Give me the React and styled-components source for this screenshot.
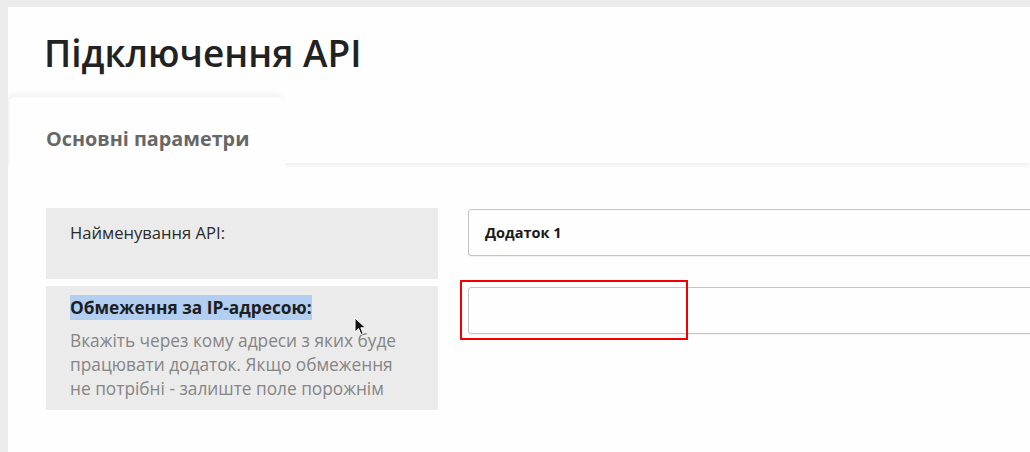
import React from 'react';
import styled, { createGlobalStyle } from 'styled-components';

const Global = createGlobalStyle`
    html, body {
        margin: 0;
        padding: 0;
        background: #ebebeb;
        font-family: "Open Sans", "Noto Sans", sans-serif;
        overflow: hidden;
    }
`;

const Page = styled.div`
    height: 452px;
    padding: 7px 0 0 8px;
    box-sizing: border-box;
`;

const Panel = styled.section`
    background: #fefefe;
    height: 100%;
    overflow: hidden;
    position: relative;
`;

const Title = styled.h1`
    margin: 0;
    padding: 20px 0 0 36px;
    height: 90px;
    box-sizing: border-box;
    font-size: 37px;
    font-weight: 600;
    color: #222;
`;

const Tabs = styled.div`
    display: flex;
    height: 73px;
    background: #fefefe;
    margin-left: 2px;
`;

const Tab = styled.div`
    width: 274px;
    display: flex;
    align-items: center;
    padding-left: 36px;
    padding-top: 10px;
    box-sizing: border-box;
    background: #fefefe;
    border-radius: 4px 4px 0 0;
    box-shadow: -2px -3px 5px rgba(0, 0, 0, 0.05);
    font-size: 19.8px;
    font-weight: 700;
    color: #676767;
    position: relative;
    z-index: 1;
`;

const TabFill = styled.div`
    flex: 1;
    background: #fefefe;
    margin: 0 0 7px 0;
    box-shadow: 0 4px 4px -1px rgba(0, 0, 0, 0.06);
`;

const Form = styled.div`
    display: grid;
    grid-template-columns: 392px 1fr;
    column-gap: 30px;
    row-gap: 7px;
    padding: 38px 0 0 38px;
    margin-right: -20px;
`;

const Label = styled.div`
    background: #ebebeb;
    height: ${p => p.h}px;
    padding: ${p => p.top}px 22px 0 24px;
    box-sizing: border-box;
    font-size: 16.6px;
    color: #2a2a2a;
    line-height: 24px;
`;

const Strong = styled.span`
    font-size: 17.3px;
    font-weight: 700;
    color: #1e1e1e;
    background: #b2cff2;
    padding: 1px 0;
`;

const Hint = styled.div`
    font-size: 17.3px;
    color: #858585;
    margin-top: 9px;
`;

const Cell = styled.div`
    position: relative;
    padding-top: ${p => p.top}px;
`;

const Input = styled.div`
    height: 47px;
    box-sizing: border-box;
    border: 1px solid #c4c4c4;
    border-radius: 3px;
    background: #fefefe;
    box-shadow: 0 1px 1px rgba(0, 0, 0, 0.05);
    display: flex;
    align-items: center;
    padding-left: 16px;
    font-size: 14.5px;
    font-weight: 700;
    color: #1a1a1a;
`;

const Marker = styled.div`
    position: absolute;
    left: -8px;
    top: -6px;
    width: 228px;
    height: 60px;
    box-sizing: border-box;
    border: 2px solid #f20000;
`;

const Cursor = styled.svg`
    position: absolute;
    left: 346px;
    top: 310px;
`;

export default function App() {
    return (
        <Page>
            <Global />
            <Panel>
                <Title>Підключення API</Title>
                <Tabs>
                    <Tab>Основні параметри</Tab>
                    <TabFill />
                </Tabs>
                <Form>
                    <Label h={71} top={13}>Найменування API:</Label>
                    <Cell top={1}>
                        <Input>Додаток 1</Input>
                    </Cell>
                    <Label h={124} top={10}>
                        <Strong>Обмеження за IP-адресою:</Strong>
                        <Hint>
                            Вкажіть через кому адреси з яких буде працювати додаток. Якщо обмеження не потрібні - залиште поле порожнім
                        </Hint>
                    </Label>
                    <Cell top={1}>
                        <Input />
                        <Marker />
                    </Cell>
                </Form>
                <Cursor width="14" height="20" viewBox="0 0 14 20">
                    <path d="M1 1 L1 15 L4.5 11.5 L7 17.5 L9.2 16.5 L6.8 10.8 L11.5 10.8 Z" fill="#111" stroke="#fff" strokeWidth="1" />
                </Cursor>
            </Panel>
        </Page>
    );
}
